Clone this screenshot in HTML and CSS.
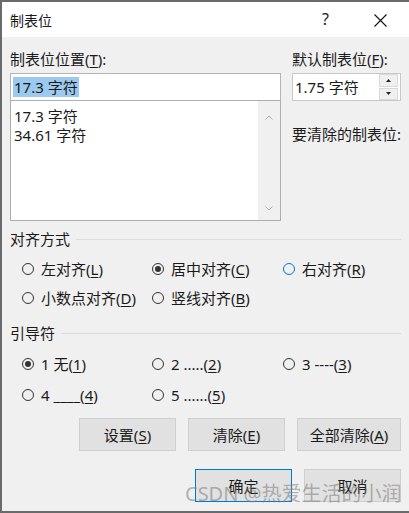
FILE: index.html
```html
<!DOCTYPE html>
<html lang="zh-CN">
<head>
  <meta charset="UTF-8" />
  <title>制表位</title>
  <link rel="stylesheet" href="styles.css">
</head>
<body>
  <div class="dialog">
    <div class="titlebar">
      <span class="title">制表位</span>
      <span class="help">?</span>
      <span class="close">
        <svg width="13" height="13" viewBox="0 0 13 13"><path d="M0.5 0.5 L12.5 12.5 M12.5 0.5 L0.5 12.5" stroke="#111" stroke-width="1.1" fill="none"/></svg>
      </span>
    </div>

    <div class="content">
      <div class="top">
        <div class="col-left">
          <div class="label">制表位位置(<u>T</u>):</div>
          <div class="textbox"><span class="selected">17.3 字符</span></div>
          <div class="listbox">
            <div class="items">
              <div>17.3 字符</div>
              <div>34.61 字符</div>
            </div>
            <div class="scrollbar">
              <svg width="8" height="5" viewBox="0 0 8 5"><path d="M0.5 4.5 L4 1 L7.5 4.5" stroke="#b0b0b0" fill="none"/></svg>
              <svg width="8" height="5" viewBox="0 0 8 5"><path d="M0.5 0.5 L4 4 L7.5 0.5" stroke="#b0b0b0" fill="none"/></svg>
            </div>
          </div>
        </div>
        <div class="col-right">
          <div class="label">默认制表位(<u>F</u>):</div>
          <div class="spinner">
            <span class="spin-value">1.75 字符</span>
            <div class="spin-buttons">
              <div class="spin-btn"><svg width="5" height="3" viewBox="0 0 5 3"><path d="M0 3 L2.5 0 L5 3 Z" fill="#222"/></svg></div>
              <div class="spin-btn"><svg width="5" height="3" viewBox="0 0 5 3"><path d="M0 0 L5 0 L2.5 3 Z" fill="#222"/></svg></div>
            </div>
          </div>
          <div class="clear-label">要清除的制表位:</div>
        </div>
      </div>

      <div class="group-title first">对齐方式</div>
      <div class="options">
        <div class="opt"><span class="radio"></span>左对齐(<u>L</u>)</div>
        <div class="opt"><span class="radio checked"></span>居中对齐(<u>C</u>)</div>
        <div class="opt"><span class="radio focus"></span>右对齐(<u>R</u>)</div>
        <div class="opt"><span class="radio"></span>小数点对齐(<u>D</u>)</div>
        <div class="opt"><span class="radio"></span>竖线对齐(<u>B</u>)</div>
      </div>

      <div class="group-title second">引导符</div>
      <div class="options leaders">
        <div class="opt"><span class="radio checked"></span>1 无(<u>1</u>)</div>
        <div class="opt"><span class="radio"></span>2 .....(<u>2</u>)</div>
        <div class="opt"><span class="radio"></span>3 ----(<u>3</u>)</div>
        <div class="opt"><span class="radio"></span>4 ____(<u>4</u>)</div>
        <div class="opt"><span class="radio"></span>5 ......(<u>5</u>)</div>
      </div>

      <div class="buttons row1">
        <button class="btn">设置(<u>S</u>)</button>
        <button class="btn">清除(<u>E</u>)</button>
        <button class="btn wide">全部清除(<u>A</u>)</button>
      </div>
      <div class="buttons row2">
        <button class="btn default">确定</button>
        <button class="btn">取消</button>
      </div>
    </div>

    <div class="watermark">CSDN @热爱生活的小润</div>
  </div>
</body>
</html>
```

FILE: styles.css
```css
body {
  margin: 0;
  background: #f0f0f0;
  font-family: "Noto Sans", "Noto Sans CJK SC", sans-serif;
  color: #1a1a1a;
}

.dialog {
  position: relative;
  width: 407px;
  height: 509px;
  border-top: 2px solid #6a6a6a;
  border-left: 2px solid #6a6a6a;
  border-bottom: 2px solid #6a6a6a;
  background: #f0f0f0;
  overflow: hidden;
}

u {
  text-decoration: underline;
  text-underline-offset: 2px;
}

/* title bar */
.titlebar {
  height: 35px;
  background: #fff;
  display: flex;
  align-items: center;
  padding-left: 8px;
  font-size: 14px;
}

.title {
  flex: 1;
}

.help {
  font-size: 16px;
  width: 52px;
  margin-top: -2px;
}

.close {
  width: 35px;
  display: flex;
  padding-top: 2px;
}

/* main area */
.content {
  padding: 12px 8px 0 8px;
  font-size: 15px;
  line-height: 20px;
}

.top {
  display: grid;
  grid-template-columns: 271px 109px;
  column-gap: 11px;
}

.label {
  margin-bottom: 4px;
  white-space: nowrap;
}

.textbox {
  height: 28px;
  box-sizing: border-box;
  background: #fff;
  border: 1px solid #b4b4b4;
  padding: 3px 2px;
  display: flex;
  align-items: center;
}

.selected {
  background: #9bc9ef;
  padding: 0 1px;
}

.listbox {
  margin-top: -1px;
  height: 121px;
  box-sizing: border-box;
  border: 1px solid #aeaeae;
  background: #fff;
  display: flex;
}

.items {
  flex: 1;
  padding: 6px 3px;
  line-height: 19px;
}

.scrollbar {
  width: 22px;
  background: #f0f0f0;
  display: flex;
  flex-direction: column;
  justify-content: space-between;
  align-items: center;
  padding: 14px 0 9px;
}

.spinner {
  height: 28px;
  box-sizing: border-box;
  background: #fff;
  border: 1px solid #c8c8c8;
  display: flex;
  align-items: center;
  padding-left: 2px;
}

.spin-value {
  flex: 1;
}

.spin-buttons {
  width: 19px;
  height: 26px;
  display: flex;
  flex-direction: column;
  gap: 1px;
  margin-right: 2px;
}

.spin-btn {
  flex: 1;
  background: #f0f0f0;
  border: 1px solid #dadada;
  display: flex;
  align-items: center;
  justify-content: center;
}

.clear-label {
  margin-top: 23px;
  white-space: nowrap;
}

/* group headings */
.group-title {
  display: flex;
  align-items: center;
  gap: 6px;
}

.group-title::after {
  content: "";
  flex: 1;
  height: 1px;
  background: #dcdcdc;
}

.group-title.first {
  margin-top: 8px;
}

.group-title.second {
  margin-top: 15px;
}

.options {
  display: grid;
  grid-template-columns: 130px 131px auto;
  row-gap: 9px;
  padding-left: 12px;
  margin-top: 10px;
}

.leaders {
  margin-top: 11px;
  row-gap: 11px;
}

.opt {
  display: flex;
  align-items: center;
  white-space: nowrap;
}

.radio {
  width: 12px;
  height: 12px;
  box-sizing: border-box;
  border: 1px solid #333;
  border-radius: 50%;
  margin-right: 7px;
  display: flex;
  align-items: center;
  justify-content: center;
}

.radio.checked::after {
  content: "";
  width: 6px;
  height: 6px;
  border-radius: 50%;
  background: #333;
}

.radio.focus {
  border-color: #0078d7;
}

/* buttons */
.buttons {
  display: flex;
  justify-content: flex-end;
  gap: 12px;
}

.row1 {
  margin-top: 13px;
}

.row2 {
  margin-top: 18px;
}

.btn {
  width: 97px;
  height: 33px;
  background: #e1e1e1;
  border: 1px solid #cfcfcf;
  font-family: inherit;
  font-size: 15px;
  color: #1a1a1a;
  padding: 0;
}

.btn.wide {
  width: 104px;
}

.btn.default {
  border: 1px solid #0078d7;
}

.watermark {
  position: absolute;
  left: 183px;
  top: 476px;
  font-size: 20px;
  color: rgba(120, 120, 120, 0.55);
  white-space: nowrap;
}
```
